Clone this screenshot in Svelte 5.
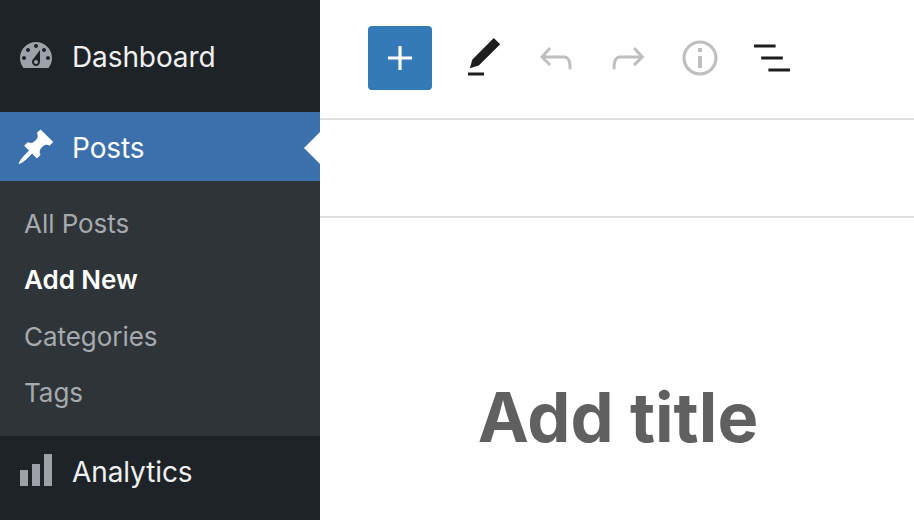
<script>
	const submenu = [
		{ label: 'All Posts' },
		{ label: 'Add New', current: true },
		{ label: 'Categories' },
		{ label: 'Tags' }
	];
</script>

<div class="page">
	<nav class="sidebar">
		<a class="item dashboard">
			<svg viewBox="0 0 20 20" width="40" height="40"><path d="M3.76 16h12.48c1.1-1.37 1.76-3.11 1.76-5 0-4.42-3.58-8-8-8s-8 3.58-8 8c0 1.89.66 3.63 1.76 5zM10 4c.55 0 1 .45 1 1s-.45 1-1 1-1-.45-1-1 .45-1 1-1zM6 6c.55 0 1 .45 1 1s-.45 1-1 1-1-.45-1-1 .45-1 1-1zm8 0c.55 0 1 .45 1 1s-.45 1-1 1-1-.45-1-1 .45-1 1-1zm-5.37 5.55L12 7v6c0 1.1-.9 2-2 2s-2-.9-2-2c0-.57.24-1.08.63-1.45zM4 10c.55 0 1 .45 1 1s-.45 1-1 1-1-.45-1-1 .45-1 1-1zm12 0c.55 0 1 .45 1 1s-.45 1-1 1-1-.45-1-1 .45-1 1-1zm-5 3c0-.55-.45-1-1-1s-1 .45-1 1 .45 1 1 1 1-.45 1-1z" /></svg>
			<span>Dashboard</span>
		</a>
		<a class="item posts">
			<svg viewBox="0 0 20 20" width="40" height="40"><path d="M10.44 3.02l1.82-1.82 6.36 6.35-1.83 1.82c-1.05-.68-2.48-.57-3.41.36l-.75.75c-.92.93-1.04 2.35-.35 3.41l-1.83 1.82-2.41-2.41-2.8 2.79c-.42.42-3.38 2.71-3.8 2.29s1.86-3.39 2.28-3.81l2.79-2.79L4.1 9.36l1.83-1.82c1.05.69 2.48.57 3.4-.36l.75-.75c.93-.92 1.05-2.35.36-3.41z" /></svg>
			<span>Posts</span>
			<i class="arrow"></i>
		</a>
		<ul class="submenu">
			{#each submenu as entry}
				<li class:current={entry.current}>{entry.label}</li>
			{/each}
		</ul>
		<a class="item analytics">
			<svg viewBox="0 0 20 20" width="40" height="40"><path d="M18 18V2h-4v16h4zm-6 0V7H8v11h4zm-6 0v-8H2v8h4z" /></svg>
			<span>Analytics</span>
		</a>
	</nav>

	<main>
		<header class="toolbar">
			<button class="add" aria-label="Add block">
				<svg viewBox="0 0 24 24" width="48" height="48"><path d="M18 11.2h-5.2V6h-1.6v5.2H6v1.6h5.2V18h1.6v-5.2H18z" /></svg>
			</button>
			<div class="tools">
				<svg viewBox="0 0 24 24" width="48" height="48"><path d="M20.1 5.1L16.9 2 6.2 12.7l-1.3 4.4 4.5-1.3L20.1 5.1zM4 20.8h8v-1.5H4v1.5z" /></svg>
				<svg class="off" viewBox="0 0 24 24" width="48" height="48"><path d="M18.3 11.7c-.6-.6-1.4-.9-2.3-.9H6.7l2.9-3.3-1.1-1-4.5 5L8.5 16l1-1-2.7-2.7H16c.5 0 .9.2 1.3.5 1 1 1 3.4 1 4.5v.3h1.5v-.2c0-1.5 0-4.3-1.5-5.7z" /></svg>
				<svg class="off" viewBox="0 0 24 24" width="48" height="48"><path d="M15.6 6.5l-1.1 1 2.9 3.3H8c-.9 0-1.7.3-2.3.9-1.4 1.5-1.4 4.2-1.4 5.7v.2h1.5v-.3c0-1.1 0-3.5 1-4.5.3-.3.7-.5 1.3-.5h9.2L14.5 15l1.1 1.1 4.6-4.6-4.6-5z" /></svg>
				<svg class="off" viewBox="0 0 24 24" width="48" height="48"><path d="M12 3.2c-4.8 0-8.8 3.9-8.8 8.8 0 4.8 3.9 8.8 8.8 8.8 4.8 0 8.8-3.9 8.8-8.8 0-4.8-4-8.8-8.8-8.8zm0 16c-4 0-7.2-3.3-7.2-7.2C4.8 8 8 4.8 12 4.8s7.2 3.3 7.2 7.2c0 4-3.2 7.2-7.2 7.2zM11 17h2v-6h-2v6zm0-8h2V7h-2v2z" /></svg>
				<svg viewBox="0 0 24 24" width="48" height="48"><path d="M13.8 5.2H3v1.5h10.8V5.2zm-3.6 12v1.5H21v-1.5H10.2zm7.2-6H6.6v1.5h10.8v-1.5z" /></svg>
			</div>
		</header>
		<div class="notices"></div>
		<h1>Add title</h1>
	</main>
</div>

<style>
	:global(body) {
		margin: 0;
		background: #fff;
	}
	.page {
		display: flex;
		width: 914px;
		height: 520px;
		overflow: hidden;
		font-family: Inter, 'Liberation Sans', sans-serif;
	}
	.sidebar {
		flex: 0 0 320px;
		display: flex;
		flex-direction: column;
		background: #1e2327;
	}
	.item {
		display: flex;
		align-items: center;
		gap: 16px;
		padding-left: 16px;
		font-size: 28px;
		letter-spacing: -0.1px;
		color: #f0f0f1;
	}
	.item span {
		padding-top: 2px;
	}
	.item svg {
		fill: #9ca2a7;
		flex: 0 0 auto;
	}
	.dashboard {
		height: 112px;
	}
	.posts {
		position: relative;
		height: 69px;
		background: #3b70ad;
		color: #fff;
	}
	.posts svg {
		fill: #fff;
	}
	.arrow {
		position: absolute;
		right: 0;
		top: 20px;
		border: 16px solid transparent;
		border-left-width: 0;
		border-right-color: #fff;
	}
	.submenu {
		height: 255px;
		box-sizing: border-box;
		margin: 0;
		padding: 15px 0 0 24px;
		list-style: none;
		background: #2f3438;
		color: #a5aaae;
		font-size: 26px;
		letter-spacing: -0.05px;
	}
	.submenu li {
		height: 56.4px;
		line-height: 56px;
	}
	.submenu .current {
		color: #fff;
		font-weight: 600;
	}
	.analytics {
		flex: 1;
		padding-bottom: 14px;
	}
	.analytics svg {
		margin-top: -2px;
	}
	main {
		flex: 1;
		min-width: 0;
	}
	.toolbar {
		display: flex;
		align-items: center;
		height: 118px;
		padding-left: 48px;
		border-bottom: 2px solid #e0e0e0;
	}
	.add {
		width: 64px;
		height: 64px;
		padding: 8px;
		margin-top: -2px;
		border: 0;
		border-radius: 4px;
		background: #337ab7;
	}
	.add svg {
		display: block;
		fill: #fff;
	}
	.tools {
		display: flex;
		gap: 24px;
		margin-left: 28px;
		margin-top: -2px;
	}
	.tools svg {
		fill: #1e1e1e;
	}
	.tools .off {
		fill: #bfbfbf;
	}
	.notices {
		height: 96px;
		border-bottom: 2px solid #e0e0e0;
	}
	h1 {
		margin: 156px 0 0;
		text-align: center;
		font-size: 68.5px;
		line-height: 88px;
		font-weight: 700;
		color: #606060;
		padding-left: 2px;
	}
</style>
